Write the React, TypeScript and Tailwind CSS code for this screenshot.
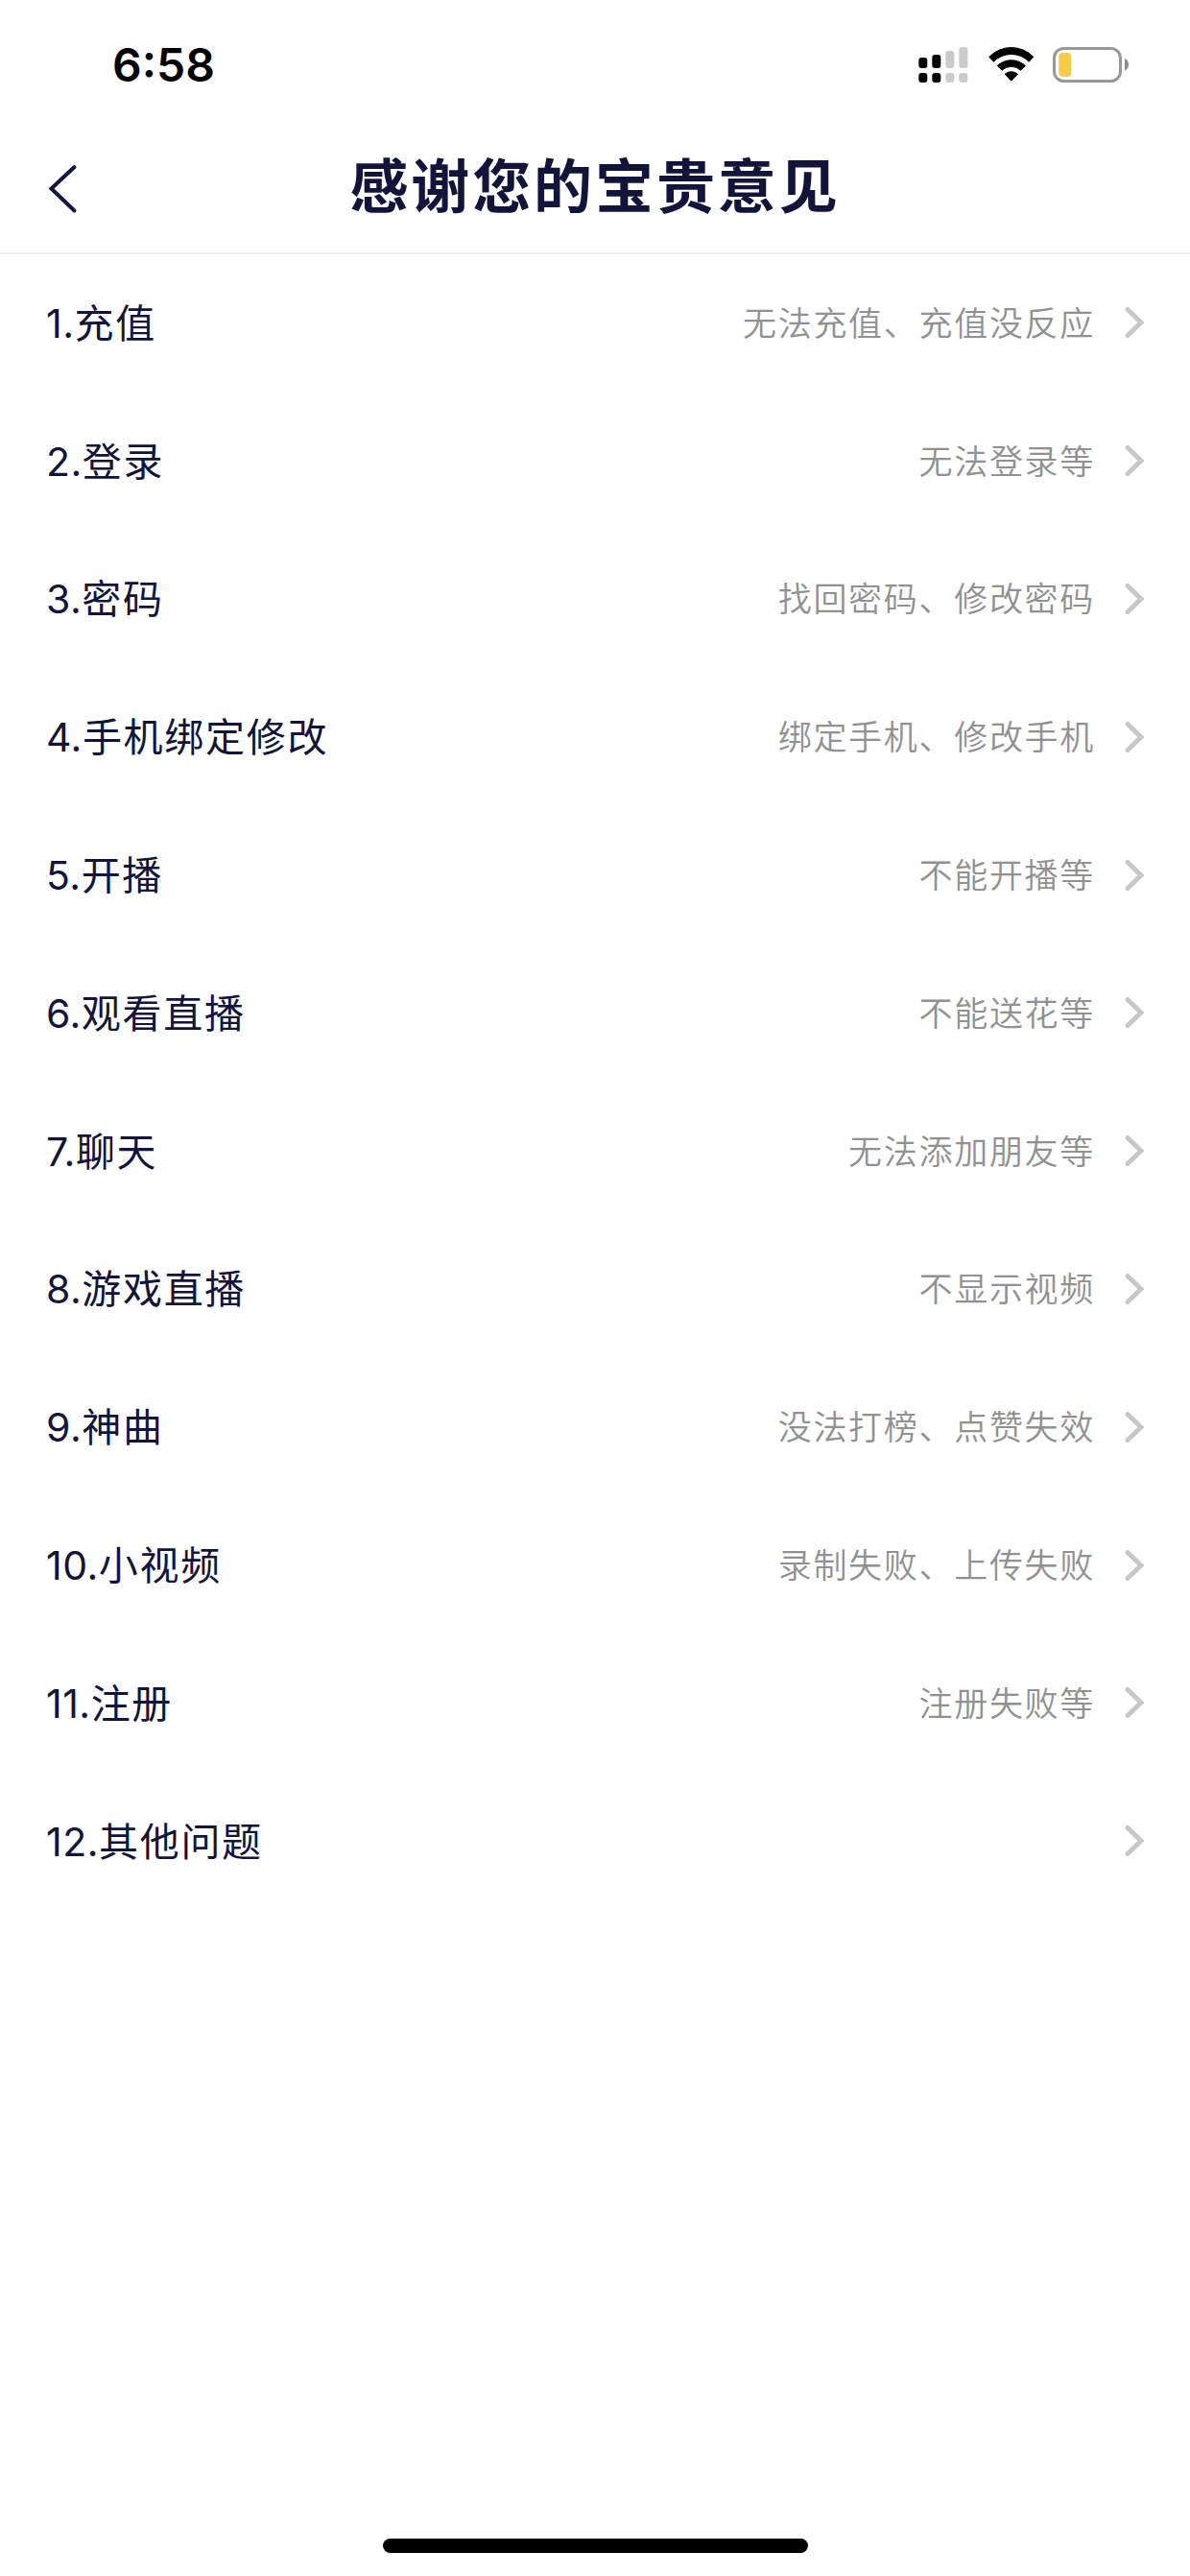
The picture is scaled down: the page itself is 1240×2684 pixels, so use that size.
const questions = [
  { title: '充值', hint: '无法充值、充值没反应' },
  { title: '登录', hint: '无法登录等' },
  { title: '密码', hint: '找回密码、修改密码' },
  { title: '手机绑定修改', hint: '绑定手机、修改手机' },
  { title: '开播', hint: '不能开播等' },
  { title: '观看直播', hint: '不能送花等' },
  { title: '聊天', hint: '无法添加朋友等' },
  { title: '游戏直播', hint: '不显示视频' },
  { title: '神曲', hint: '没法打榜、点赞失效' },
  { title: '小视频', hint: '录制失败、上传失败' },
  { title: '注册', hint: '注册失败等' },
  { title: '其他问题', hint: '' },
];

function SignalIcon() {
  return (
    <svg width="52" height="38" viewBox="0 0 52 38">
      <g fill="#000">
        <rect x="0.3" y="11" width="9" height="11" rx="3" />
        <rect x="14.3" y="8" width="9" height="14" rx="3" />
        <rect x="0.3" y="27" width="9" height="10" rx="3" />
        <rect x="14.3" y="27" width="9" height="10" rx="3" />
      </g>
      <g fill="#cbcbcb">
        <rect x="28.3" y="4" width="9" height="18" rx="3" />
        <rect x="42.3" y="0" width="9" height="22" rx="3" />
        <rect x="28.3" y="27" width="9" height="10" rx="3" />
        <rect x="42.3" y="27" width="9" height="10" rx="3" />
      </g>
    </svg>
  );
}

function WifiIcon() {
  return (
    <svg width="48" height="38" viewBox="0 0 48 38" fill="#000" stroke="#000" strokeWidth="1" strokeLinejoin="round">
      <path d="M0.8 10.3A32 32 0 0 1 46.8 10.3L42.2 15.2A25.8 25.8 0 0 0 5.4 15.2Z" />
      <path d="M9.3 19.4A21.4 21.4 0 0 1 38.3 19.4L33.6 24.2A14.4 14.4 0 0 0 14 24.2Z" />
      <path d="M17.2 28.2A10 10 0 0 1 30.4 28.2L23.8 35.2Z" />
    </svg>
  );
}

function BatteryIcon() {
  return (
    <svg width="80" height="38" viewBox="0 0 80 38">
      <rect x="1.5" y="1.5" width="69" height="34" rx="10" fill="none" stroke="#999" strokeWidth="3" />
      <rect x="6.3" y="6" width="13" height="25" rx="4" fill="#f6cb45" />
      <path d="M75 12C80.3 14 80.3 22.5 75 24.5Z" fill="#8c8c8c" />
    </svg>
  );
}

export default function App() {
  return (
    <div className="flex h-[2684px] w-[1240px] flex-col bg-white font-['Inter','Noto_Sans_CJK_SC',sans-serif] text-[#12143a]">
      <div className="flex h-[134px] items-start justify-between pr-[63px] pl-[117px]">
        <span className="mt-[38px] text-[48px] leading-[60px] font-semibold text-black">6:58</span>
        <div className="mt-[49px] flex">
          <SignalIcon />
          <div className="ml-[21px]">
            <WifiIcon />
          </div>
          <div className="ml-[19px]">
            <BatteryIcon />
          </div>
        </div>
      </div>

      <header className="flex h-[131px] items-center border-b-2 border-[#ebebeb] px-[50px]">
        <button className="mt-[-4px] w-[60px]">
          <svg width="32" height="52" viewBox="0 0 32 52" fill="none" stroke="#12143a" strokeWidth="4" strokeLinecap="round">
            <path d="M27.5 3L3.5 25.5L27.5 48.5" />
          </svg>
        </button>
        <h1 className="mt-[-7px] flex-1 text-center text-[61px] leading-[80px] font-bold tracking-[2.9px]">感谢您的宝贵意见</h1>
        <div className="w-[60px]" />
      </header>

      <ul>
        {questions.map((q, i) => (
          <li key={q.title} className="flex h-[143.8px] items-center pr-[47px] pl-[48px]">
            <span className="flex-1 text-[41px] leading-[60px] tracking-[1.7px]">
              <span className="tracking-[0.5px]">{i + 1}.</span>
              {q.title}
            </span>
            <span className="text-[35px] leading-[50px] font-[350] tracking-[1.7px] text-[#919191]">{q.hint}</span>
            <svg className="mt-[-1px] ml-[30px]" width="22" height="34" viewBox="0 0 22 34" fill="none" stroke="#c8c8c8" strokeWidth="5" strokeLinecap="round">
              <path d="M4 3.5L18 17L4 30.5" />
            </svg>
          </li>
        ))}
      </ul>

      <div className="mt-auto mb-[24px] h-[15px] w-[443px] self-center rounded-full bg-black" />
    </div>
  );
}
